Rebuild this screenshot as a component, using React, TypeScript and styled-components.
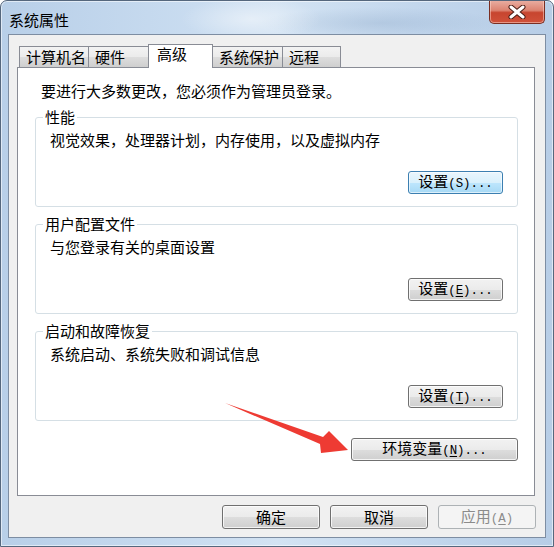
import { FC, ReactNode } from 'react'
import styled, { createGlobalStyle, css } from 'styled-components'

const GlobalStyle = createGlobalStyle`
  html, body {
    margin: 0;
    padding: 0;
    background: #ffffff;
  }
`

const Window = styled.div`
  position: relative;
  box-sizing: border-box;
  width: 554px;
  height: 547px;
  display: flex;
  flex-direction: column;
  border: 1px solid #55677d;
  border-radius: 7px 7px 0 0;
  overflow: hidden;
  background:
    radial-gradient(ellipse 70px 22px at 250px 18px, rgba(255, 255, 255, 0.45), transparent),
    radial-gradient(ellipse 120px 16px at 380px 22px, rgba(120, 150, 185, 0.25), transparent),
    linear-gradient(to right, #b8cfe8 0%, #c9dcf0 35%, #d3e3f3 50%, #c3d7ed 75%, #b7cde6 100%);
  box-shadow: inset 0 0 0 1px rgba(255, 255, 255, 0.55);
  font-family: 'Noto Sans CJK SC', 'Noto Sans', sans-serif;
  font-size: 15px;
  color: #000;
`

const TitleBar = styled.div`
  height: 33px;
  display: flex;
  align-items: flex-start;
  justify-content: space-between;
  padding-left: 8px;
`

const Title = styled.div`
  padding-top: 9px;
  line-height: 20px;
  color: #000;
`

const CloseButton = styled.div`
  box-sizing: border-box;
  width: 56px;
  height: 24px;
  margin-top: -1px;
  margin-right: 8px;
  display: flex;
  align-items: center;
  justify-content: center;
  border: 1px solid #7a2e22;
  border-top: none;
  border-radius: 0 0 5px 5px;
  background: linear-gradient(#eab0a4 0%, #dc8371 45%, #c7452f 55%, #d0513a 100%);
  box-shadow: inset 0 0 0 1px rgba(255, 220, 210, 0.5);
`

const Client = styled.div`
  box-sizing: border-box;
  width: 538px;
  height: 504px;
  margin-left: 7px;
  display: flex;
  flex-direction: column;
  padding: 9px 9px 0 8px;
  border: 1px solid #7d8da2;
  background: #f0f0f0;
`

const TabStrip = styled.div`
  height: 23px;
  display: flex;
  align-items: flex-end;
  padding-left: 2px;
`

const Tab = styled.div<{ $w: number; $active?: boolean }>`
  box-sizing: border-box;
  width: ${(p) => p.$w}px;
  height: 21px;
  padding: 0 6px;
  line-height: 20px;
  white-space: nowrap;
  border: 1px solid #898c95;
  border-bottom: none;
  background: linear-gradient(#f3f3f3 0%, #ebebeb 50%, #dddddd 51%, #cfcfcf 100%);
  & + & {
    margin-left: -1px;
  }
  ${(p) =>
    p.$active &&
    css`
      position: relative;
      z-index: 1;
      height: 24px;
      margin-bottom: -1px;
      padding-left: 8px;
      line-height: 18px;
      background: #ffffff;
    `}
`

const Panel = styled.div`
  box-sizing: border-box;
  width: 518px;
  height: 429px;
  display: flex;
  flex-direction: column;
  padding: 13px 16px 0 17px;
  border: 1px solid #898c95;
  background: #ffffff;
`

const Note = styled.div`
  margin-left: 6px;
  line-height: 20px;
`

const Group = styled.fieldset`
  box-sizing: border-box;
  min-width: 0;
  margin: 8px 0 0;
  padding: 0;
  border: 1px solid #d5dfe5;
  border-radius: 3px;
  & + & {
    margin-top: 9px;
  }
`

const Legend = styled.legend`
  margin-left: 7px;
  padding: 0 2px;
  line-height: 16px;
`

const GroupBody = styled.div`
  display: flex;
  flex-direction: column;
  padding: 5px 14px 12px 14px;
`

const Description = styled.div`
  line-height: 20px;
  margin-bottom: 21px;
`

const Button = styled.button<{ $w: number; $h?: number; $hot?: boolean }>`
  box-sizing: border-box;
  width: ${(p) => p.$w}px;
  height: ${(p) => p.$h ?? 23}px;
  padding: 0;
  font: inherit;
  line-height: 18px;
  color: #000;
  border: 1px solid #707070;
  border-radius: 3px;
  background: linear-gradient(#f2f2f2 0%, #ebebeb 50%, #dddddd 51%, #cfcfcf 100%);
  box-shadow: inset 0 0 0 1px rgba(255, 255, 255, 0.75);
  align-self: flex-end;
  ${(p) =>
    p.$hot &&
    css`
      border-color: #3c7fb1;
      background: linear-gradient(#eaf6fd 0%, #d9f0fc 50%, #bee6fd 51%, #a7d9f5 100%);
      box-shadow: inset 0 0 0 1px rgba(255, 255, 255, 0.6);
    `}
  &:disabled {
    border-color: #adb2b5;
    background: #f4f4f4;
    box-shadow: none;
    color: #8b8b8b;
  }
`

const EnvButton = styled(Button)`
  margin-top: 17px;
`

const Latin = styled.span`
  font-family: 'Liberation Mono', monospace;
  font-size: 12.4px;
`

const Key = styled.span`
  text-decoration: underline;
  text-underline-offset: 2px;
`

const ButtonRow = styled.div`
  display: flex;
  justify-content: flex-end;
  gap: 10px;
  margin-top: 9px;
`

const ArrowLayer = styled.svg`
  position: absolute;
  left: -1px;
  top: -1px;
  z-index: 5;
  pointer-events: none;
`

const Mnemonic: FC<{ k: string; underline?: boolean }> = ({ k, underline = true }) => (
  <Latin>
    ({underline ? <Key>{k}</Key> : k})...
  </Latin>
)

type GroupProps = { title: string; text: string; children: ReactNode }

const SettingsGroup: FC<GroupProps> = ({ title, text, children }) => (
  <Group>
    <Legend>{title}</Legend>
    <GroupBody>
      <Description>{text}</Description>
      {children}
    </GroupBody>
  </Group>
)

const CloseGlyph = () => (
  <svg width="22" height="14" viewBox="0 0 22 14">
    <path d="M5 2 L17 12 M17 2 L5 12" stroke="#4a1c14" strokeWidth="5" strokeLinecap="round" />
    <path d="M5 2 L17 12 M17 2 L5 12" stroke="#ffffff" strokeWidth="3" strokeLinecap="round" />
  </svg>
)

// annotation arrow drawn over the dialog, pointing at the env-vars button
const RedArrow = () => (
  <ArrowLayer width="554" height="547" viewBox="0 0 554 547">
    <polygon
      points="225,403 323,437 329,431 348,450 321,453 320,444"
      fill="#ee3b33"
    />
  </ArrowLayer>
)

const App: FC = () => (
  <>
    <GlobalStyle />
    <Window>
      <TitleBar>
        <Title>系统属性</Title>
        <CloseButton>
          <CloseGlyph />
        </CloseButton>
      </TitleBar>
      <Client>
        <TabStrip>
          <Tab $w={70}>计算机名</Tab>
          <Tab $w={61}>硬件</Tab>
          <Tab $w={65} $active>
            高级
          </Tab>
          <Tab $w={71}>系统保护</Tab>
          <Tab $w={59}>远程</Tab>
        </TabStrip>
        <Panel>
          <Note>要进行大多数更改，您必须作为管理员登录。</Note>
          <SettingsGroup title="性能" text="视觉效果，处理器计划，内存使用，以及虚拟内存">
            <Button $w={95} $hot>
              设置<Mnemonic k="S" underline={false} />
            </Button>
          </SettingsGroup>
          <SettingsGroup title="用户配置文件" text="与您登录有关的桌面设置">
            <Button $w={95}>
              设置<Mnemonic k="E" />
            </Button>
          </SettingsGroup>
          <SettingsGroup title="启动和故障恢复" text="系统启动、系统失败和调试信息">
            <Button $w={95}>
              设置<Mnemonic k="T" />
            </Button>
          </SettingsGroup>
          <EnvButton $w={167}>
            环境变量<Mnemonic k="N" />
          </EnvButton>
        </Panel>
        <ButtonRow>
          <Button $w={98} $h={24}>确定</Button>
          <Button $w={98} $h={24}>取消</Button>
          <Button $w={98} $h={24} disabled>
            应用<Latin>(<Key>A</Key>)</Latin>
          </Button>
        </ButtonRow>
      </Client>
      <RedArrow />
    </Window>
  </>
)

export default App
